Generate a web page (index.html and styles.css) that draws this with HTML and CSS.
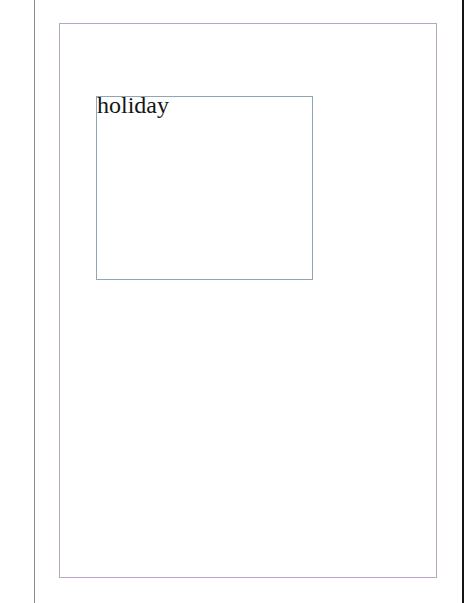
FILE: index.html
```html
<!DOCTYPE html>
<html>
<head>
<meta charset="utf-8">
<link rel="stylesheet" href="styles.css">
</head>
<body>
<div class="spread">
  <div class="page">
    <div class="textframe">
      <p class="story">holiday</p>
    </div>
  </div>
</div>
</body>
</html>
```
FILE: styles.css
```css
html, body {
  margin: 0;
  padding: 0;
  background: #ffffff;
}
.spread {
  box-sizing: border-box;
  margin-left: 34px;
  width: 430px;
  height: 603px;
  border-left: 1px solid #8a8a8a;
  border-right: 2px solid #141414;
  padding-top: 23px;
}
.page {
  box-sizing: border-box;
  margin-left: 24px;
  width: 378px;
  height: 555px;
  border: 1px solid #bba6c2;
  padding-top: 72px;
  padding-left: 36px;
}
.textframe {
  box-sizing: border-box;
  width: 217px;
  height: 184px;
  border: 1px solid #8fa6b3;
}
.story {
  margin: 0;
  font-family: "Liberation Serif", "DejaVu Serif", serif;
  font-size: 24px;
  line-height: 17px;
  color: #151515;
}
```
